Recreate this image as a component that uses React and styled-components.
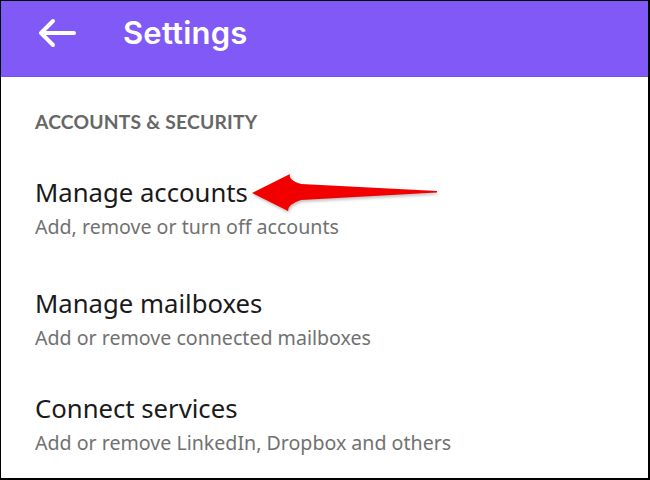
import React from 'react'
import styled, { createGlobalStyle } from 'styled-components'

const Global = createGlobalStyle`
  html, body {
    margin: 0;
    padding: 0;
    background: #fff;
  }
`

const Frame = styled.div`
  width: 650px;
  height: 480px;
  box-sizing: border-box;
  border-style: solid;
  border-color: #000;
  border-width: 1px 2px 2px 1px;
  overflow: hidden;
  background: #fff;
  display: flex;
  flex-direction: column;
`

const Header = styled.header`
  height: 76px;
  flex-shrink: 0;
  background: #8059f6;
  border-bottom: 1px solid #7650e8;
  display: flex;
  align-items: center;
  padding: 0 0 12px 37px;
  box-sizing: border-box;
  gap: 47px;
`

const BackButton = styled.button`
  border: none;
  background: none;
  padding: 0;
  width: 38px;
  height: 30px;
  display: flex;
  align-items: center;
  cursor: pointer;
`

const Title = styled.h1`
  margin: 0;
  color: #fff;
  font-family: Inter, "Open Sans", sans-serif;
  font-weight: 600;
  font-size: 31px;
  letter-spacing: 0.2px;
`

const Content = styled.main`
  padding: 33px 0 0 34px;
  display: flex;
  flex-direction: column;
`

const SectionLabel = styled.h2`
  margin: 0 0 43px;
  font-family: Lato, Inter, sans-serif;
  font-weight: 700;
  font-size: 19.3px;
  letter-spacing: 0.2px;
  color: #676767;
  line-height: 24px;
`

const Row = styled.div`
  display: flex;
  flex-direction: column;
  margin-bottom: ${p => p.$gap || 0}px;
  position: relative;
`

const RowTitle = styled.div`
  font-family: "Noto Sans", "Open Sans", sans-serif;
  font-size: 25.7px;
  color: #1a1a1a;
  line-height: 32px;
`

const RowSub = styled.div`
  font-family: "Noto Sans", "Open Sans", sans-serif;
  font-size: 19.6px;
  color: #717171;
  line-height: 26px;
  margin-top: 5px;
`

const Pointer = styled.svg`
  position: absolute;
  left: 214px;
  top: -8px;
  filter: drop-shadow(1px 2px 1.5px rgba(0, 0, 0, 0.25));
`

const BackArrow = () => (
  <svg width="38" height="30" viewBox="0 0 38 30">
    <path
      d="M36 15 H4 M15 3 L3 15 L15 27"
      fill="none"
      stroke="#fff"
      strokeWidth="4"
      strokeLinecap="round"
      strokeLinejoin="round"
    />
  </svg>
)

const RedArrow = () => (
  <Pointer width="200" height="50" viewBox="0 0 200 50">
    <path
      d="M3 24 L41 5 Q39 11 52 15 L188 22 L188 23.5 L52 31 Q39 35 39 42 Z"
      fill="#f20000"
    />
  </Pointer>
)

const items = [
  { title: 'Manage accounts', sub: 'Add, remove or turn off accounts', arrow: true, gap: 48 },
  { title: 'Manage mailboxes', sub: 'Add or remove connected mailboxes', gap: 42 },
  { title: 'Connect services', sub: 'Add or remove LinkedIn, Dropbox and others', gap: 0 },
]

export default function App() {
  return (
    <>
      <Global />
      <Frame>
        <Header>
          <BackButton aria-label="Back">
            <BackArrow />
          </BackButton>
          <Title>Settings</Title>
        </Header>
        <Content>
          <SectionLabel>ACCOUNTS &amp; SECURITY</SectionLabel>
          {items.map(item => (
            <Row key={item.title} $gap={item.gap}>
              <RowTitle>{item.title}</RowTitle>
              <RowSub>{item.sub}</RowSub>
              {item.arrow && <RedArrow />}
            </Row>
          ))}
        </Content>
      </Frame>
    </>
  )
}
